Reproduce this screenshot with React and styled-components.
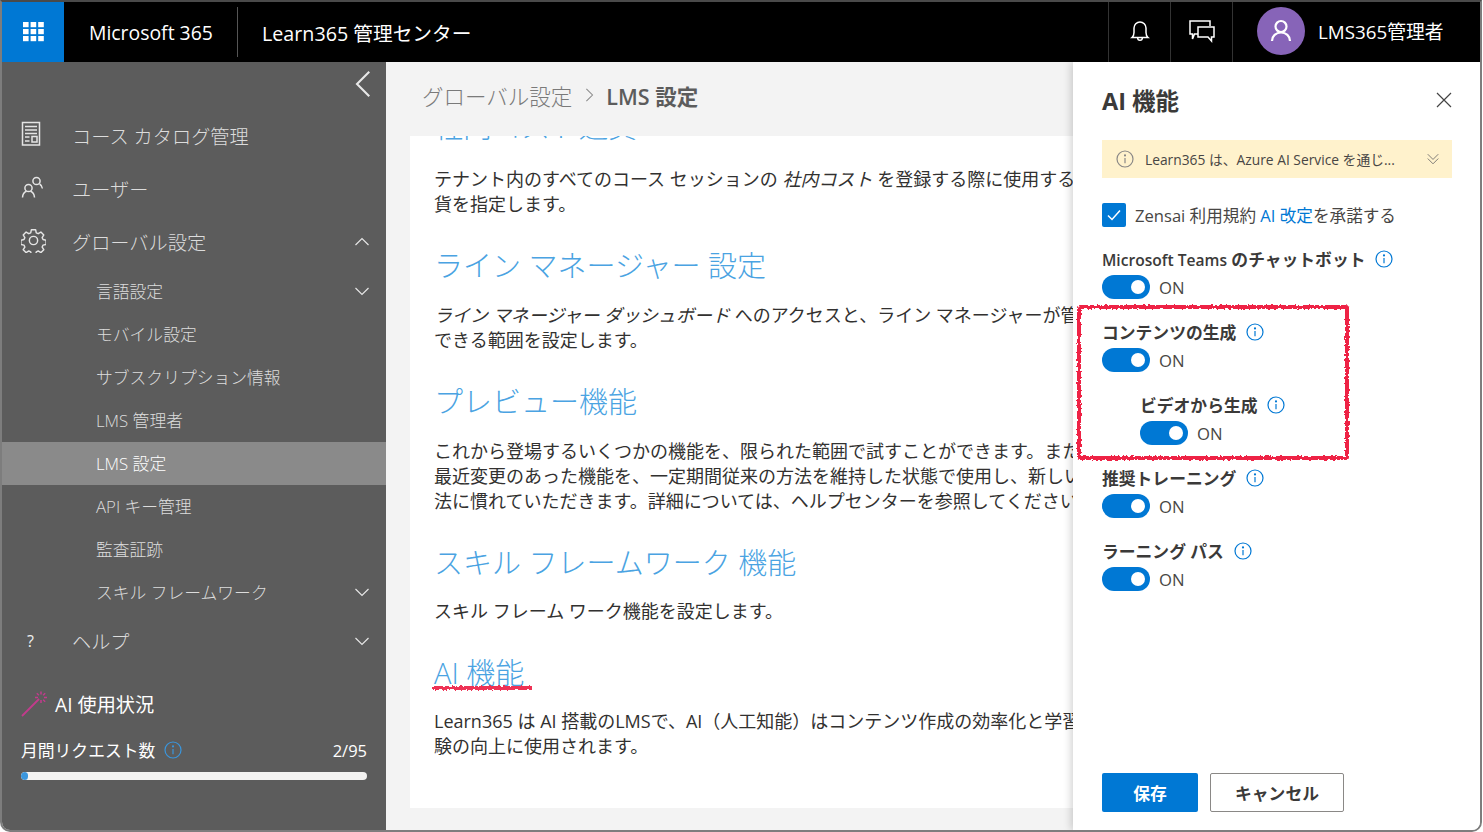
import React from "react";
import styled, { createGlobalStyle } from "styled-components";

const GlobalStyle = createGlobalStyle`
  html, body { margin: 0; padding: 0; background: #fff; }
  body {
    font-family: "Open Sans", "Noto Sans CJK JP", sans-serif;
    color: #323130;
  }
  * { box-sizing: border-box; }
`;

const CARD_BLOCKS = [
  {
    title: "ライン マネージャー 設定",
    lines: [
      <><em>ライン マネージャー ダッシュボード</em> へのアクセスと、ライン マネージャーが管理</>,
      "できる範囲を設定します。",
    ],
  },
  {
    title: "プレビュー機能",
    lines: [
      "これから登場するいくつかの機能を、限られた範囲で試すことができます。また、",
      "最近変更のあった機能を、一定期間従来の方法を維持した状態で使用し、新しい方",
      "法に慣れていただきます。詳細については、ヘルプセンターを参照してください。",
    ],
  },
  {
    title: "スキル フレームワーク 機能",
    tight: true,
    lines: ["スキル フレーム ワーク機能を設定します。"],
  },
];

const SUB_ITEMS = [
  { label: "言語設定", more: true },
  { label: "モバイル設定" },
  { label: "サブスクリプション情報" },
  { label: "LMS 管理者" },
  { label: "LMS 設定", active: true },
  { label: "API キー管理" },
  { label: "監査証跡" },
  { label: "スキル フレームワーク", more: true },
];

const FEATURES = [
  { latin: "Microsoft Teams", label: " のチャットボット", id: "teams" },
  { label: "コンテンツの生成", id: "content" },
  { label: "ビデオから生成", id: "video", nested: true },
  { label: "推奨トレーニング", id: "training" },
  { label: "ラーニング パス", id: "path" },
];

function Chevron({ dir = "down", size = 16, color = "#e6e6e6" }) {
  const d = dir === "down" ? "M1.5 5l6.5 6.5L14.5 5" : dir === "up" ? "M1.5 11L8 4.5 14.5 11" : "M11 1L4 8l7 7";
  return (
    <svg width={size} height={size} viewBox="0 0 16 16" fill="none" stroke={color} strokeWidth="1.2">
      <path d={d} />
    </svg>
  );
}

function InfoIcon({ size = 18, color = "#0078d4" }) {
  return (
    <svg width={size} height={size} viewBox="0 0 18 18" fill="none" stroke={color} strokeWidth="1.2">
      <circle cx="9" cy="9" r="8" />
      <path d="M9 8v5.2" />
      <circle cx="9" cy="5.4" r=".5" fill={color} />
    </svg>
  );
}

function Waffle() {
  const cells = [];
  for (let y = 0; y < 3; y++) {
    for (let x = 0; x < 3; x++) {
      cells.push(<rect key={x + "-" + y} x={x * 7.6} y={y * 7} width="5.6" height="5.2" fill="#fff" />);
    }
  }
  return (
    <svg width="21" height="20" viewBox="0 0 21 20">
      {cells}
    </svg>
  );
}

function CatalogIcon() {
  return (
    <svg width="20" height="26" viewBox="0 0 20 26" fill="none" stroke="#e4e4e4" strokeWidth="1.5">
      <rect x="1.5" y="1.5" width="17" height="22.5" />
      <path d="M4 5.5h12M4 9h12M4 12.5h12M4 16h4.5M4 20h4.5" />
      <rect x="11" y="15.5" width="5" height="5.5" />
    </svg>
  );
}

function UsersIcon() {
  return (
    <svg width="24" height="24" viewBox="0 0 24 24" fill="none" stroke="#e4e4e4" strokeWidth="1.5">
      <circle cx="15.5" cy="6" r="3.6" />
      <path d="M18.6 9c1.6 1 2.6 2.5 2.8 4.5" />
      <circle cx="7.5" cy="13" r="3.6" />
      <path d="M1.5 22.5c.2-3.200 2-5.500 4-6.200M13.500 22.500c-.2-3.200-2-5.500-4-6.200" />
    </svg>
  );
}

function GearIcon() {
  return (
    <svg width="25" height="25" viewBox="0 0 26 26" fill="none" stroke="#e4e4e4" strokeWidth="1.5">
      <circle cx="13" cy="13" r="4.3" />
      <path d="M10.800 1.800h4.400l.7 3.200 2 .9 2.800-1.700 3 3-1.700 2.800.9 2 3.200.7v4.400l-3.200.7-.9 2 1.700 2.800-3 3-2.800-1.700-2 .9-.7 3.200h-4.400l-.7-3.200-2-.9-2.800 1.700-3-3 1.700-2.800-.9-2-3.200-.7v-4.400l3.200-.7.9-2-1.700-2.800 3-3 2.800 1.700 2-.9z" strokeLinejoin="round" />
    </svg>
  );
}

function BellIcon() {
  return (
    <svg width="20" height="24" viewBox="0 0 20 24" fill="none" stroke="#fff" strokeWidth="1.5">
      <path d="M2 18.500c1.400-1.200 2-2.500 2-5V9a6 6 0 0112 0v4.500c0 2.500.6 3.800 2 5z" />
      <path d="M7.700 19a2.300 2.300 0 004.600 0" />
    </svg>
  );
}

function ChatIcon() {
  return (
    <svg width="26" height="24" viewBox="0 0 26 24" fill="none" stroke="#fff" strokeWidth="1.5">
      <path d="M9 15H5.500L3.500 20V15H1V2h20v5" />
      <path d="M9 8h16v10h-2.500V22l-3.500-4H9z" />
    </svg>
  );
}

function PersonIcon() {
  return (
    <svg width="22" height="24" viewBox="0 0 22 24" fill="none" stroke="#fff" strokeWidth="2.2">
      <circle cx="11" cy="7.500" r="5.500" />
      <path d="M2 22c0-5 4-8.500 9-8.500s9 3.500 9 8.500" />
    </svg>
  );
}

function WandIcon() {
  return (
    <svg width="28" height="28" viewBox="0 0 28 28" fill="none" stroke="#c23b8c" strokeWidth="1.5">
      <path d="M1 26L18 9" strokeWidth="1.800" />
      <path d="M20 1.500v3M20 10v3M14 7.500h3M23 7.500h3M15.800 3.300l2 2M22.200 9.700l2 2M24.200 3.300l-2 2" />
    </svg>
  );
}

// hand-drawn looking annotations on top of the screenshot
function RoughFilter() {
  return (
    <FilterDefs width="0" height="0" aria-hidden="true">
      <filter id="rough">
        <feTurbulence type="fractalNoise" baseFrequency="0.35" numOctaves="2" seed="4" />
        <feDisplacementMap in="SourceGraphic" scale="4" />
      </filter>
    </FilterDefs>
  );
}

export default function App() {
  return (
    <>
      <GlobalStyle />
      <RoughFilter />
      <Frame>
        <TopBar>
          <WaffleButton>
            <Waffle />
          </WaffleButton>
          <Brand>Microsoft 365</Brand>
          <AppName>Learn365 管理センター</AppName>
          <TopRight>
            <TopIconCell>
              <BellIcon />
            </TopIconCell>
            <TopIconCell>
              <ChatIcon />
            </TopIconCell>
            <UserCell>
              <Avatar>
                <PersonIcon />
              </Avatar>
              <UserName>LMS365管理者</UserName>
            </UserCell>
          </TopRight>
        </TopBar>

        <Body>
          <Sidebar>
            <CollapseRow>
              <Chevron dir="left" size={28} color="#e8e8e8" />
            </CollapseRow>
            <NavItem>
              <NavIcon><CatalogIcon /></NavIcon>
              コース カタログ管理
            </NavItem>
            <NavItem>
              <NavIcon><UsersIcon /></NavIcon>
              ユーザー
            </NavItem>
            <NavItem>
              <NavIcon><GearIcon /></NavIcon>
              グローバル設定
              <NavChevron><Chevron dir="up" /></NavChevron>
            </NavItem>
            <SubList>
              {SUB_ITEMS.map((item) => (
                <SubItem key={item.label} $active={item.active}>
                  {item.label}
                  {item.more && <NavChevron><Chevron /></NavChevron>}
                </SubItem>
              ))}
            </SubList>
            <NavItem>
              <NavIcon><HelpMark>?</HelpMark></NavIcon>
              ヘルプ
              <NavChevron><Chevron /></NavChevron>
            </NavItem>

            <UsageBlock>
              <UsageTitle>
                <WandIcon />
                AI 使用状況
              </UsageTitle>
              <UsageRow>
                <UsageLabel>
                  月間リクエスト数
                  <InfoIcon color="#3a96dd" />
                </UsageLabel>
                <UsageCount>2/95</UsageCount>
              </UsageRow>
              <Progress>
                <ProgressFill style={{ width: `${(2 / 95) * 100}%` }} />
              </Progress>
            </UsageBlock>
          </Sidebar>

          <Main>
            <Breadcrumb>
              <Crumb>グローバル設定</Crumb>
              <CrumbSep><Chevron dir="left" size={14} color="#8a8a8a" /></CrumbSep>
              <CrumbCurrent>LMS 設定</CrumbCurrent>
            </Breadcrumb>
            <Card>
              <ClippedTitle>社内コスト通貨</ClippedTitle>
              <Para>
                テナント内のすべてのコース セッションの <em>社内コスト</em> を登録する際に使用する通<br />
                貨を指定します。
              </Para>
              {CARD_BLOCKS.map((b) => (
                <React.Fragment key={b.title}>
                  <SectionTitle $tight={b.tight}>{b.title}</SectionTitle>
                  <Para>
                    {b.lines.map((l, i) => (
                      <span key={i}>{l}<br /></span>
                    ))}
                  </Para>
                </React.Fragment>
              ))}
              <SectionTitle $tight>
                AI 機能
                <RoughUnderline />
              </SectionTitle>
              <Para>
                Learn365 は AI 搭載のLMSで、AI（人工知能）はコンテンツ作成の効率化と学習体<br />
                験の向上に使用されます。
              </Para>
            </Card>
          </Main>

          <Panel>
            <PanelHead>
              <PanelTitle>AI 機能</PanelTitle>
              <CloseIcon viewBox="0 0 16 16" fill="none" stroke="#444" strokeWidth="1.2">
                <path d="M1 1l14 14M15 1L1 15" />
              </CloseIcon>
            </PanelHead>
            <Notice>
              <InfoIcon color="#8a8886" />
              <NoticeText>Learn365 は、Azure AI Service を通じ...</NoticeText>
              <NoticeChevron viewBox="0 0 16 16" fill="none" stroke="#6f6d6b" strokeWidth="1">
                <path d="M2 2.500l6 6 6-6M2 7.500l6 6 6-6" />
              </NoticeChevron>
            </Notice>
            <CheckRow>
              <CheckBox>
                <svg width="16" height="16" viewBox="0 0 16 16" fill="none" stroke="#fff" strokeWidth="1.500">
                  <path d="M2 8.500l4 4 8-9" />
                </svg>
              </CheckBox>
              Zensai 利用規約 <TermsLink>AI 改定</TermsLink>を承諾する
            </CheckRow>
            <Features>
              {FEATURES.map((f) => (
                <Feature key={f.id} $nested={f.nested}>
                  <FeatureLabel>
                    <span>
                      {f.latin && <Latin>{f.latin}</Latin>}
                      {f.label}
                    </span>
                    <InfoIcon />
                  </FeatureLabel>
                  <ToggleRow>
                    <Toggle><ToggleKnob /></Toggle>
                    <ToggleText>ON</ToggleText>
                  </ToggleRow>
                </Feature>
              ))}
            </Features>
            <PanelFoot>
              <PrimaryButton>保存</PrimaryButton>
              <SecondaryButton>キャンセル</SecondaryButton>
            </PanelFoot>
          </Panel>

          <RedBox />
        </Body>
      </Frame>
    </>
  );
}

const FilterDefs = styled.svg`
  position: absolute;
`;

const Frame = styled.div`
  width: 1482px;
  height: 832px;
  border: 2px solid #7d7d7d;
  border-top-color: #4a4a4a;
  border-radius: 0 0 10px 10px;
  overflow: hidden;
  display: flex;
  flex-direction: column;
`;

const TopBar = styled.header`
  height: 60px;
  flex: none;
  background: #000;
  color: #fff;
  display: flex;
  align-items: center;
`;

const WaffleButton = styled.div`
  width: 62px;
  height: 60px;
  background: #0078d4;
  display: flex;
  align-items: center;
  justify-content: center;
`;

const Brand = styled.div`
  font-size: 19.4px;
  padding-left: 25px;
  padding-top: 1px;
  width: 174px;
  height: 50px;
  line-height: 50px;
  border-right: 1px solid #555;
  white-space: nowrap;
`;

const AppName = styled.div`
  font-size: 19.7px;
  padding-left: 24px;
  white-space: nowrap;
`;

const TopRight = styled.div`
  margin-left: auto;
  display: flex;
  height: 60px;
`;

const TopIconCell = styled.div`
  width: 62px;
  padding-bottom: 2px;
  border-left: 1px solid #333;
  display: flex;
  align-items: center;
  justify-content: center;
`;

const UserCell = styled.div`
  width: 248px;
  border-left: 1px solid #333;
  display: flex;
  align-items: center;
  padding: 0 0 2px 24px;
  gap: 13px;
`;

const Avatar = styled.div`
  width: 48px;
  height: 48px;
  border-radius: 50%;
  background: #8764b8;
  display: flex;
  align-items: center;
  justify-content: center;
`;

const UserName = styled.div`
  font-size: 18.8px;
  white-space: nowrap;
`;

const Body = styled.div`
  flex: 1;
  min-height: 0;
  display: flex;
  position: relative;
`;

const Sidebar = styled.nav`
  width: 384px;
  flex: none;
  background: #5c5c5c;
  color: #dcdcdc;
`;

const CollapseRow = styled.div`
  height: 48px;
  display: flex;
  align-items: center;
  justify-content: flex-end;
  padding: 0 8px 4px 0;
`;

const NavItem = styled.div`
  height: 53px;
  padding-bottom: 2px;
  display: flex;
  align-items: center;
  font-size: 19.2px;
  font-weight: 300;
  white-space: nowrap;
  position: relative;
`;

const NavIcon = styled.span`
  width: 70px;
  padding: 0 0 3px 19px;
  display: flex;
  align-items: center;
`;

const NavChevron = styled.span`
  margin-left: auto;
  margin-right: 16px;
  display: flex;
`;

const HelpMark = styled.span`
  font-size: 16px;
  font-weight: 400;
  color: #f0f0f0;
  padding-left: 6px;
  margin-top: 3px;
`;

const SubList = styled.div`
  margin: 1px 0;
`;

const SubItem = styled.div`
  height: 43px;
  padding-bottom: 2px;
  display: flex;
  align-items: center;
  padding-left: 94px;
  font-size: 16.8px;
  font-weight: 300;
  white-space: nowrap;
  background: ${(p) => (p.$active ? "#8a8a8a" : "transparent")};
  color: ${(p) => (p.$active ? "#fff" : "#dcdcdc")};
`;

const UsageBlock = styled.div`
  padding: 20px 19px 0;
  color: #fff;
`;

const UsageTitle = styled.div`
  display: flex;
  align-items: center;
  gap: 6px;
  font-size: 19.2px;
  height: 32px;
`;

const UsageRow = styled.div`
  display: flex;
  justify-content: space-between;
  align-items: center;
  margin-top: 16px;
  height: 28px;
`;

const UsageLabel = styled.div`
  display: flex;
  align-items: center;
  gap: 9px;
  font-size: 16.8px;
`;

const UsageCount = styled.div`
  font-size: 16.5px;
`;

const Progress = styled.div`
  height: 8px;
  margin-top: 8px;
  border-radius: 4px;
  background: #f3f2f1;
  overflow: hidden;
`;

const ProgressFill = styled.div`
  height: 100%;
  min-width: 7px;
  border-radius: 4px;
  background: #3a96dd;
`;

const Main = styled.main`
  flex: 1;
  min-width: 0;
  background: #f3f3f3;
  overflow: hidden;
  display: flex;
  flex-direction: column;
`;

const Breadcrumb = styled.div`
  height: 74px;
  flex: none;
  display: flex;
  align-items: center;
  padding: 0 0 8px 36px;
  white-space: nowrap;
`;

const Crumb = styled.span`
  font-size: 21.5px;
  font-weight: 300;
  color: #7a7a7a;
`;

const CrumbSep = styled.span`
  display: flex;
  margin: 0 10px;
  transform: scaleX(-1);
`;

const CrumbCurrent = styled.span`
  font-size: 21.5px;
  font-weight: 600;
  color: #5c5c5c;
`;

const Card = styled.section`
  width: 760px;
  height: 672px;
  flex: none;
  margin-left: 24px;
  background: #fff;
  padding: 0 24px;
  overflow: hidden;
  white-space: nowrap;
`;

const SectionTitle = styled.h2`
  position: relative;
  display: table;
  margin: 0;
  font-size: 29px;
  font-weight: 300;
  line-height: 40px;
  color: #4aa3e2;
  padding-top: 29px;
  margin-bottom: ${(p) => (p.$tight ? "16px" : "17px")};
  box-sizing: content-box;
`;

const ClippedTitle = styled(SectionTitle)`
  margin-top: -29px;
  padding-top: 0;
  margin-bottom: 20px;
`;

const Para = styled.p`
  margin: 0;
  font-size: 18px;
  line-height: 25px;
  color: #323130;
  em { font-style: italic; }
`;

const RoughUnderline = styled.span`
  position: absolute;
  left: -2px;
  right: -8px;
  bottom: 3px;
  height: 4px;
  background: #ee3355;
  filter: url(#rough);
`;

const Panel = styled.aside`
  width: 407px;
  flex: none;
  background: #fff;
  padding: 0 28px 0 29px;
  box-shadow: -2px 0 8px rgba(0, 0, 0, 0.18);
  display: flex;
  flex-direction: column;
  position: relative;
`;

const PanelHead = styled.div`
  height: 78px;
  padding-bottom: 2px;
  flex: none;
  display: flex;
  align-items: center;
  justify-content: space-between;
`;

const PanelTitle = styled.h3`
  margin: 0;
  font-size: 23.5px;
  font-weight: 700;
  color: #3b3a39;
`;

const CloseIcon = styled.svg`
  width: 16px;
  height: 16px;
`;

const Notice = styled.div`
  height: 38px;
  flex: none;
  background: #fff2cc;
  display: flex;
  align-items: center;
  padding: 0 12px 0 14px;
  font-size: 13.8px;
  color: #484644;
`;

const NoticeText = styled.span`
  margin-left: 11px;
  white-space: nowrap;
`;

const NoticeChevron = styled.svg`
  width: 14px;
  height: 14px;
  margin-left: auto;
`;

const CheckRow = styled.div`
  display: flex;
  align-items: center;
  margin-top: 25px;
  height: 24px;
  font-size: 16.6px;
  white-space: pre;
  color: #484644;
`;

const CheckBox = styled.span`
  width: 24px;
  height: 24px;
  border-radius: 2px;
  background: #0078d4;
  display: flex;
  align-items: center;
  justify-content: center;
  margin-right: 9px;
`;

const TermsLink = styled.span`
  color: #0078d4;
`;

const Features = styled.div`
  margin-top: 18px;
  display: flex;
  flex-direction: column;
  gap: 17px;
`;

const Feature = styled.div`
  padding-left: ${(p) => (p.$nested ? "38px" : "0")};
`;

const FeatureLabel = styled.div`
  display: flex;
  align-items: center;
  gap: 10px;
  height: 28px;
  font-size: 16.8px;
  font-weight: 600;
  color: #3b3a39;
  white-space: nowrap;
`;

// the Latin part of a label runs narrower than the Japanese part
const Latin = styled.span`
  font-size: 15.6px;
`;

const ToggleRow = styled.div`
  display: flex;
  align-items: center;
  height: 28px;
  gap: 9px;
`;

const Toggle = styled.span`
  width: 48px;
  height: 24px;
  border-radius: 12px;
  background: #0078d4;
  display: flex;
  align-items: center;
  justify-content: flex-end;
  padding-right: 5px;
`;

const ToggleKnob = styled.span`
  width: 14px;
  height: 14px;
  border-radius: 50%;
  background: #fff;
`;

const ToggleText = styled.span`
  font-size: 16.7px;
  color: #484644;
`;

const PanelFoot = styled.div`
  margin-top: auto;
  margin-bottom: 18px;
  display: flex;
  gap: 12px;
`;

const PrimaryButton = styled.button`
  width: 96px;
  height: 39px;
  border: 0;
  border-radius: 2px;
  background: #0078d4;
  color: #fff;
  font: 700 16.8px "Open Sans", "Noto Sans CJK JP", sans-serif;
`;

const SecondaryButton = styled.button`
  width: 134px;
  height: 39px;
  border: 1px solid #8a8886;
  border-radius: 2px;
  background: #fff;
  color: #3b3a39;
  font: 700 16.8px "Open Sans", "Noto Sans CJK JP", sans-serif;
`;

const RedBox = styled.div`
  position: absolute;
  left: 1075px;
  top: 243px;
  width: 272px;
  height: 155px;
  border: 4px solid #ee2244;
  border-radius: 3px;
  filter: url(#rough);
  pointer-events: none;
`;
